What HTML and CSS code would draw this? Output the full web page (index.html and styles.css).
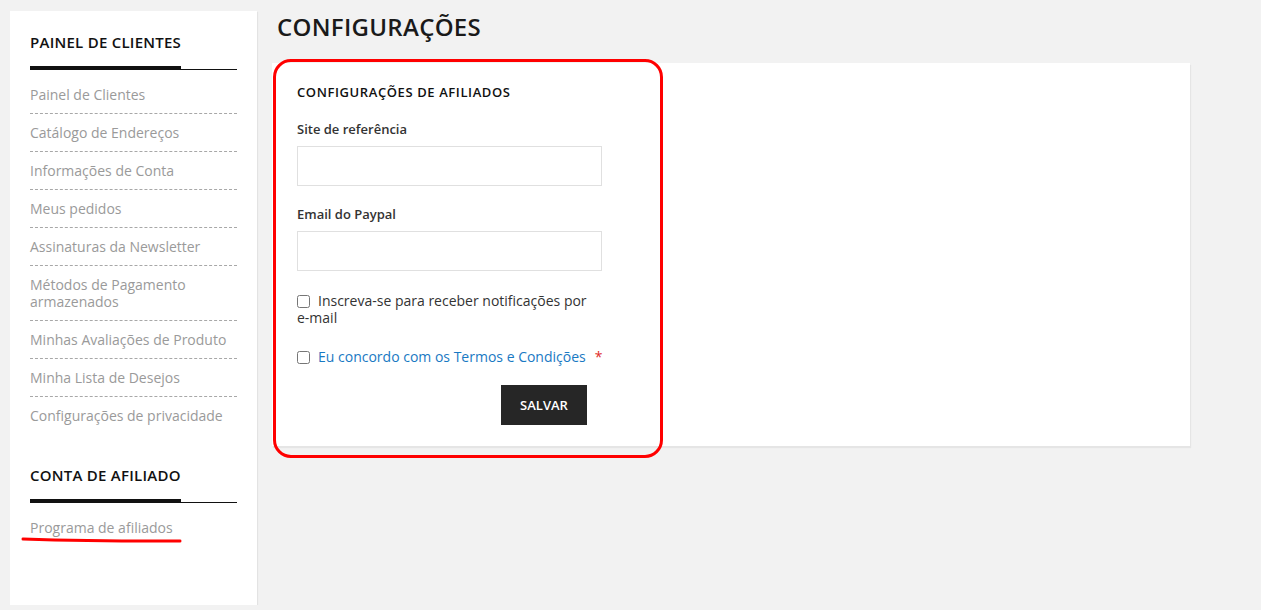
FILE: index.html
```html
<!DOCTYPE html>
<html lang="pt-BR">
<head>
<meta charset="utf-8">
<title>Configurações</title>
<link rel="stylesheet" href="styles.css">
</head>
<body>
<div class="page">
  <aside class="sidebar">
    <div class="block">
      <div class="block-title"><span>PAINEL DE CLIENTES</span></div>
      <ul class="nav">
        <li>Painel de Clientes</li>
        <li>Catálogo de Endereços</li>
        <li>Informações de Conta</li>
        <li>Meus pedidos</li>
        <li>Assinaturas da Newsletter</li>
        <li>Métodos de Pagamento armazenados</li>
        <li>Minhas Avaliações de Produto</li>
        <li>Minha Lista de Desejos</li>
        <li>Configurações de privacidade</li>
      </ul>
    </div>
    <div class="block block-second">
      <div class="block-title"><span>CONTA DE AFILIADO</span></div>
      <ul class="nav">
        <li class="marked">Programa de afiliados
          <svg class="scribble" width="162" height="8" viewBox="0 0 162 8"><path d="M2 3 C 50 4.6, 110 5.2, 159 5" stroke="#ff0000" stroke-width="3" fill="none" stroke-linecap="round"/></svg>
        </li>
      </ul>
    </div>
  </aside>
  <main class="main">
    <h1 class="page-title">CONFIGURAÇÕES</h1>
    <section class="card">
      <div class="highlight"></div>
      <form class="form">
        <h2 class="form-title">CONFIGURAÇÕES DE AFILIADOS</h2>
        <label class="label">Site de referência</label>
        <input class="input" type="text">
        <label class="label label-2">Email do Paypal</label>
        <input class="input" type="text">
        <div class="check check-1">
          <input type="checkbox" class="cb"><span>Inscreva-se para receber notificações por <span class="nowrap">e-mail</span></span>
        </div>
        <div class="check check-2">
          <input type="checkbox" class="cb"><a class="terms" href="#">Eu concordo com os Termos e Condições</a><span class="req">*</span>
        </div>
        <div class="actions">
          <button type="button" class="btn">SALVAR</button>
        </div>
      </form>
    </section>
  </main>
</div>
</body>
</html>
```
FILE: styles.css
```css
* { box-sizing: border-box; }
html, body { margin: 0; padding: 0; }
body {
  background: #f2f2f2;
  font-family: "Open Sans", "Liberation Sans", sans-serif;
  color: #333;
}
.page {
  display: flex;
  align-items: flex-start;
  gap: 15px;
  padding: 11px 0 0 10px;
  width: 1190px;
}
.sidebar {
  width: 247px;
  min-height: 594px;
  background: #fff;
  padding: 21px 20px 30px 20px;
  box-shadow: 1px 1px 1px rgba(0,0,0,0.06);
  flex-shrink: 0;
}
.block-second { margin-top: 31px; }
.block-title {
  border-bottom: 1px solid #111;
  font-size: 15px;
  font-weight: 600;
  letter-spacing: 0.25px;
  color: #111;
  line-height: 20px;
  height: 38px;
}
.block-title span {
  display: inline-block;
  height: 38px;
  border-bottom: 4px solid #111;
}
.nav {
  list-style: none;
  margin: 6px 0 0;
  padding: 0;
}
.nav li {
  position: relative;
  color: #9a9a9a;
  font-size: 14px;
  line-height: 17px;
  padding: 10px 0;
  border-bottom: 1px dashed #a8a8a8;
}
.nav li:last-child { border-bottom: 0; }
.scribble {
  position: absolute;
  left: -9px;
  top: 27px;
}
.main {
  width: 918px;
  flex-shrink: 0;
}
.page-title {
  margin: 0 0 20px 5px;
  font-size: 24px;
  line-height: 32px;
  font-weight: 600;
  letter-spacing: 0.3px;
  color: #1a1a1a;
}
.card {
  position: relative;
  background: #fff;
  min-height: 383px;
  padding: 20px 25px 20px 25px;
  box-shadow: 1px 2px 1px rgba(0,0,0,0.05);
}
.highlight {
  position: absolute;
  left: 1px;
  top: -4px;
  width: 390px;
  height: 399px;
  border: 3.5px solid #ff0000;
  border-radius: 18px;
  pointer-events: none;
}
.form { width: 305px; }
.form-title {
  margin: 0;
  font-size: 13px;
  line-height: 18px;
  font-weight: 600;
  letter-spacing: 0.6px;
  color: #111;
}
.label {
  display: block;
  margin-top: 19px;
  font-size: 13px;
  line-height: 18px;
  font-weight: 600;
  color: #333;
}
.input {
  display: block;
  width: 305px;
  height: 40px;
  margin-top: 8px;
  border: 1px solid #e0e0e0;
  background: #fff;
  border-radius: 0;
  outline: none;
}
.check {
  font-size: 14px;
  line-height: 17px;
  color: #333;
}
.nowrap { white-space: nowrap; }
.check-1 { margin-top: 21px; }
.check-2 { margin-top: 22px; white-space: nowrap; }
.cb {
  width: 13px;
  height: 13px;
  margin: 0 8px 0 0;
  vertical-align: -2px;
}
.terms {
  color: #1979c3;
  text-decoration: none;
}
.req {
  color: #e02b27;
  margin-left: 9px;
}
.actions {
  margin-top: 20px;
  display: flex;
  justify-content: flex-end;
  padding-right: 15px;
}
.btn {
  width: 86px;
  height: 40px;
  border: 0;
  background: #262626;
  color: #fff;
  font-family: "Open Sans", "Liberation Sans", sans-serif;
  font-size: 13px;
  font-weight: 600;
  cursor: pointer;
}
```
